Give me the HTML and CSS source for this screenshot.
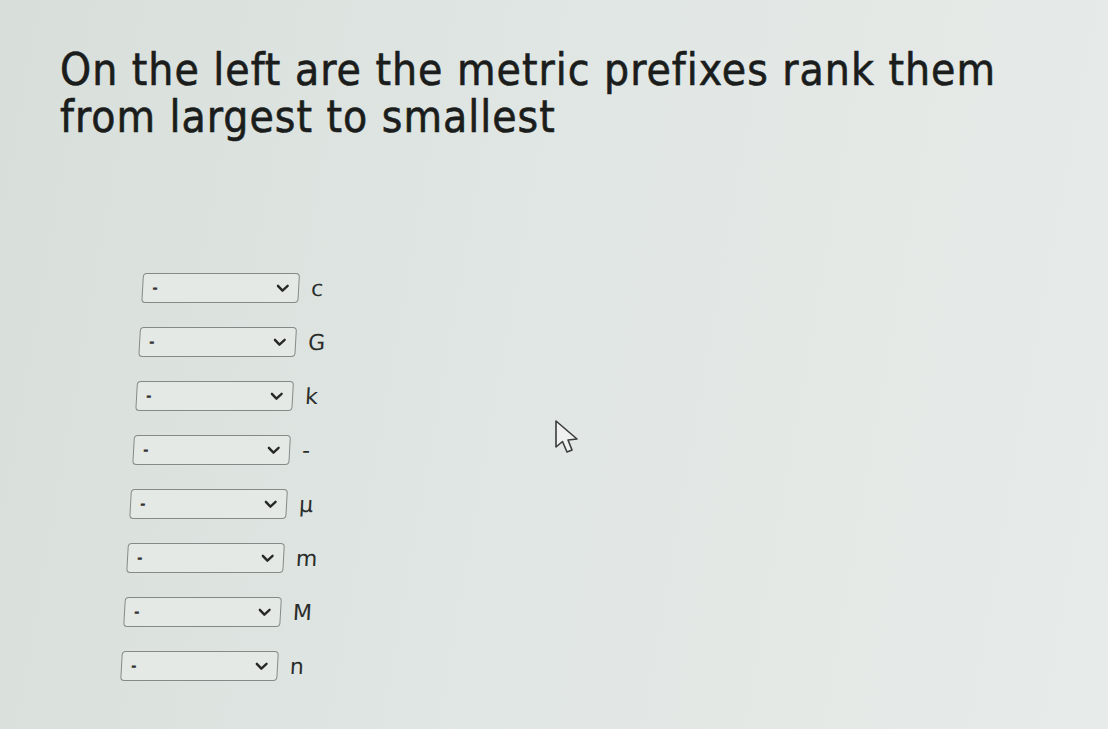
FILE: index.html
```html
<!DOCTYPE html>
<html lang="en">
<head>
    <meta charset="UTF-8">
    <meta name="viewport" content="width=device-width, initial-scale=1.0">
    <title>Metric Prefixes</title>
    <link rel="stylesheet" href="styles.css">
</head>
<body>
    <div class="page">
        <h1 class="question">On the left are the metric prefixes rank them<br>from largest to smallest</h1>

        <div class="rank-list">
            <div class="rank-row">
                <div class="select-box"><span class="select-value">-</span><svg class="chevron" viewBox="0 0 12 8"><polyline points="1.5,1.5 6,6 10.5,1.5"/></svg></div>
                <span class="prefix">c</span>
            </div>
            <div class="rank-row">
                <div class="select-box"><span class="select-value">-</span><svg class="chevron" viewBox="0 0 12 8"><polyline points="1.5,1.5 6,6 10.5,1.5"/></svg></div>
                <span class="prefix">G</span>
            </div>
            <div class="rank-row">
                <div class="select-box"><span class="select-value">-</span><svg class="chevron" viewBox="0 0 12 8"><polyline points="1.5,1.5 6,6 10.5,1.5"/></svg></div>
                <span class="prefix">k</span>
            </div>
            <div class="rank-row">
                <div class="select-box"><span class="select-value">-</span><svg class="chevron" viewBox="0 0 12 8"><polyline points="1.5,1.5 6,6 10.5,1.5"/></svg></div>
                <span class="prefix">-</span>
            </div>
            <div class="rank-row">
                <div class="select-box"><span class="select-value">-</span><svg class="chevron" viewBox="0 0 12 8"><polyline points="1.5,1.5 6,6 10.5,1.5"/></svg></div>
                <span class="prefix">μ</span>
            </div>
            <div class="rank-row">
                <div class="select-box"><span class="select-value">-</span><svg class="chevron" viewBox="0 0 12 8"><polyline points="1.5,1.5 6,6 10.5,1.5"/></svg></div>
                <span class="prefix">m</span>
            </div>
            <div class="rank-row">
                <div class="select-box"><span class="select-value">-</span><svg class="chevron" viewBox="0 0 12 8"><polyline points="1.5,1.5 6,6 10.5,1.5"/></svg></div>
                <span class="prefix">M</span>
            </div>
            <div class="rank-row">
                <div class="select-box"><span class="select-value">-</span><svg class="chevron" viewBox="0 0 12 8"><polyline points="1.5,1.5 6,6 10.5,1.5"/></svg></div>
                <span class="prefix">n</span>
            </div>
        </div>

        <!-- mouse pointer -->
        <svg class="cursor" width="30" height="38" viewBox="0 0 30 38">
            <path d="M2 2 L2 28 L8.5 22.5 L13 33 L18 31 L14 21 L23 20 Z" fill="#eef1ef" stroke="#3a3d3c" stroke-width="1.6" stroke-linejoin="round"/>
        </svg>
    </div>
</body>
</html>
```

FILE: styles.css
```css
* {
    margin: 0;
    padding: 0;
    box-sizing: border-box;
}

body {
    width: 1108px;
    height: 729px;
    overflow: hidden;
    font-family: 'DejaVu Sans Condensed', 'DejaVu Sans', sans-serif;
    background: linear-gradient(100deg, #d8dfdb 0%, #e0e6e3 45%, #e7ebe9 100%);
    color: #1e2120;
}

.page {
    position: relative;
    height: 100%;
    padding: 46px 0 0 60px;
}

.question {
    font-size: 44px;
    font-weight: normal;
    line-height: 47px;
    letter-spacing: 1px;
    white-space: nowrap;
    color: #1b1d1c;
    -webkit-text-stroke: 0.6px #1b1d1c;
}

.rank-list {
    margin-top: 133px;
    margin-left: 83px;
    display: flex;
    flex-direction: column;
    gap: 24px;
    transform: skewX(-3.2deg);
    transform-origin: top left;
}

.rank-row {
    display: flex;
    align-items: center;
    gap: 12px;
    height: 30px;
}

.select-box {
    width: 157px;
    height: 30px;
    border: 1.5px solid #858a88;
    border-radius: 4px;
    background: #e4e9e6;
    display: flex;
    align-items: center;
    justify-content: space-between;
    padding: 0 9px 0 9px;
}

.select-value {
    font-size: 15px;
    font-weight: bold;
    color: #333;
}

.chevron {
    width: 13px;
    height: 9px;
    fill: none;
    stroke: #262928;
    stroke-width: 2.2;
    stroke-linecap: round;
    stroke-linejoin: round;
}

.prefix {
    font-family: 'DejaVu Sans', sans-serif;
    font-size: 22px;
    color: #2a2d2c;
}

.cursor {
    position: absolute;
    left: 554px;
    top: 419px;
}
```
